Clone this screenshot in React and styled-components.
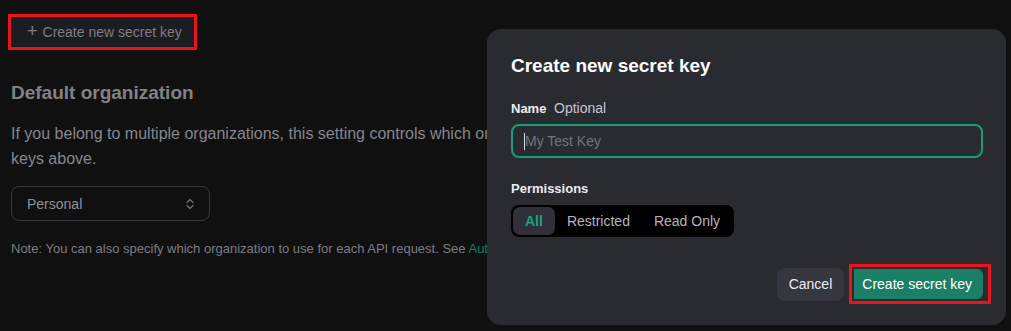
import React from "react";
import styled, {createGlobalStyle} from "styled-components";

const GlobalStyle = createGlobalStyle`
  html, body {
    margin: 0;
    padding: 0;
    background: #101011;
  }
  body {
    font-family: "Liberation Sans", Arial, sans-serif;
  }
`;

const App = () => {
    return (
        <Page>
            <GlobalStyle/>
            <Main>
                <Highlight>
                    <GhostButton>
                        <Plus>+</Plus> Create new secret key
                    </GhostButton>
                </Highlight>
                <SectionTitle>Default organization</SectionTitle>
                <Paragraph>
                    If you belong to multiple organizations, this setting controls which organization is used by default with the
                    <br/>
                    keys above.
                </Paragraph>
                <Select>
                    <span>Personal</span>
                    <svg width="10" height="12" viewBox="0 0 10 12" fill="none" stroke="#6f7078" strokeWidth="1.3"
                         strokeLinecap="round" strokeLinejoin="round">
                        <path d="M2 4.5 L5 1.5 L8 4.5"/>
                        <path d="M2 7.5 L5 10.5 L8 7.5"/>
                    </svg>
                </Select>
                <Note>
                    Note: You can also specify which organization to use for each API request. See <Link>Authentication</Link> to learn more.
                </Note>
            </Main>

            <Modal>
                <ModalTitle>Create new secret key</ModalTitle>
                <Label>
                    Name <Optional>Optional</Optional>
                </Label>
                <Input>
                    <Caret/>
                    <Placeholder>My Test Key</Placeholder>
                </Input>
                <Label $top={23}>Permissions</Label>
                <Segmented>
                    <Segment $active>All</Segment>
                    <Segment>Restricted</Segment>
                    <Segment>Read Only</Segment>
                </Segmented>
                <Footer>
                    <CancelButton>Cancel</CancelButton>
                    <Highlight $pad="2px 5px 2px 2px">
                        <PrimaryButton>Create secret key</PrimaryButton>
                    </Highlight>
                </Footer>
            </Modal>
        </Page>
    );
};

const Page = styled.div`
  position: relative;
  width: 1011px;
  height: 331px;
  overflow: hidden;
  background: #101011;
`;

// the page content runs on under the modal; clip it where the modal begins
const Main = styled.div`
  box-sizing: border-box;
  padding: 14px 0 0 11px;
  width: 487px;
  overflow: hidden;
`;

const Highlight = styled.div`
  display: inline-flex;
  border: 3px solid #e8141e;
  padding: ${p => p.$pad || "0"};
  margin-left: -3px;
`;

const GhostButton = styled.div`
  display: flex;
  align-items: center;
  gap: 5px;
  height: 30px;
  padding: 0 12px 0 16px;
  background: #1c1d22;
  color: #7d7e86;
  font-size: 14px;
`;

const Plus = styled.span`
  font-size: 18px;
  line-height: 1;
  margin-top: -2px;
`;

const SectionTitle = styled.h2`
  margin: 31px 0 0;
  font-size: 19px;
  font-weight: 700;
  color: #828285;
  line-height: 24px;
`;

const Paragraph = styled.p`
  margin: 16px 0 0;
  font-size: 16px;
  line-height: 25px;
  color: #86868c;
  white-space: nowrap;
`;

const Select = styled.div`
  display: flex;
  align-items: center;
  justify-content: space-between;
  box-sizing: border-box;
  width: 199px;
  height: 35px;
  margin-top: 15px;
  padding: 0 14px 0 15px;
  border: 1px solid #38393e;
  border-radius: 8px;
  color: #909097;
  font-size: 14px;
`;

const Note = styled.p`
  margin: 20px 0 0;
  font-size: 13px;
  color: #7c7c82;
  white-space: nowrap;
`;

const Link = styled.span`
  color: #15805f;
`;

const Modal = styled.div`
  position: absolute;
  left: 487px;
  top: 29px;
  width: 519px;
  height: 296px;
  box-sizing: border-box;
  padding: 25px 23px 0 24px;
  background: #2a2b31;
  border-radius: 14px;
  display: flex;
  flex-direction: column;
`;

const ModalTitle = styled.h1`
  margin: 0;
  font-size: 19px;
  line-height: 24px;
  font-weight: 700;
  color: #ffffff;
`;

const Label = styled.div`
  margin-top: ${p => p.$top ?? 22}px;
  font-size: 13px;
  line-height: 16px;
  font-weight: 700;
  color: #ececf1;
`;

const Optional = styled.span`
  font-size: 14px;
  font-weight: 400;
  color: #c5c5d2;
  margin-left: 4px;
`;

const Input = styled.div`
  display: flex;
  align-items: center;
  box-sizing: border-box;
  height: 34px;
  margin-top: 7px;
  padding-left: 11px;
  border: 2px solid #15a07b;
  border-radius: 8px;
  font-size: 14px;
`;

const Caret = styled.span`
  width: 1px;
  height: 17px;
  background: #d9d9e3;
`;

const Placeholder = styled.span`
  color: #72737b;
`;

const Segmented = styled.div`
  display: inline-flex;
  align-self: flex-start;
  align-items: center;
  margin-top: 8px;
  padding: 2px;
  height: 32px;
  box-sizing: border-box;
  background: #000000;
  border-radius: 8px;
`;

const Segment = styled.div`
  height: 28px;
  display: flex;
  align-items: center;
  padding: 0 12px;
  border-radius: 7px;
  font-size: 14px;
  font-weight: ${p => (p.$active ? 700 : 400)};
  color: ${p => (p.$active ? "#19a37c" : "#b4b4bd")};
  background: ${p => (p.$active ? "#2f3039" : "transparent")};
`;

const Footer = styled.div`
  display: flex;
  justify-content: flex-end;
  align-items: center;
  gap: 8px;
  margin-top: 27px;
  margin-right: -8px;
`;

const CancelButton = styled.div`
  display: flex;
  align-items: center;
  height: 33px;
  padding: 0 12px;
  border-radius: 8px;
  background: #35363f;
  color: #ececf1;
  font-size: 14px;
`;

const PrimaryButton = styled.div`
  display: flex;
  align-items: center;
  height: 30px;
  padding: 0 11px 0 8px;
  border-radius: 0 6px 6px 0;
  background: #1a7f64;
  color: #ffffff;
  font-size: 14px;
`;

export default App;
